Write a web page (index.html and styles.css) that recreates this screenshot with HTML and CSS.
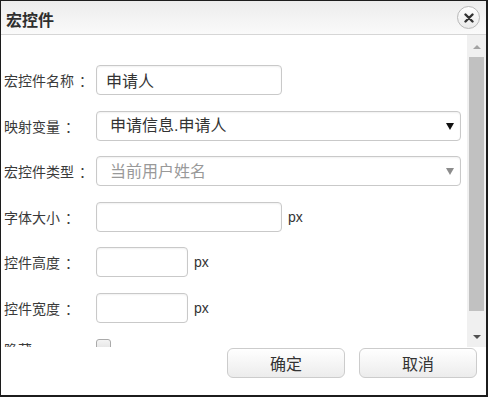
FILE: index.html
```html
<!DOCTYPE html>
<html lang="zh-CN">
<head>
    <meta charset="UTF-8">
    <title>宏控件</title>
    <link rel="stylesheet" href="styles.css">
</head>
<body>
    <div class="dialog">
        <div class="dialog-header">
            <div class="dialog-title">宏控件</div>
            <button class="close-btn" title="关闭">
                <svg width="10" height="10" viewBox="0 0 10 10">
                    <path d="M1.5 1.5L8.5 8.5M8.5 1.5L1.5 8.5" stroke="#333" stroke-width="2.4" stroke-linecap="round"/>
                </svg>
            </button>
        </div>

        <div class="dialog-body">
            <div class="form">
                <div class="form-row">
                    <label class="form-label">宏控件名称<span class="colon">：</span></label>
                    <input class="text-input w-md" type="text" value="申请人">
                </div>
                <div class="form-row">
                    <label class="form-label">映射变量<span class="colon">：</span></label>
                    <div class="select-wrap">
                        <select class="select-input">
                            <option>申请信息.申请人</option>
                        </select>
                    </div>
                </div>
                <div class="form-row">
                    <label class="form-label">宏控件类型<span class="colon">：</span></label>
                    <div class="select-wrap disabled">
                        <select class="select-input" disabled>
                            <option>当前用户姓名</option>
                        </select>
                    </div>
                </div>
                <div class="form-row">
                    <label class="form-label">字体大小<span class="colon">：</span></label>
                    <input class="text-input w-md" type="text">
                    <span class="unit">px</span>
                </div>
                <div class="form-row">
                    <label class="form-label">控件高度<span class="colon">：</span></label>
                    <input class="text-input w-sm" type="text">
                    <span class="unit">px</span>
                </div>
                <div class="form-row">
                    <label class="form-label">控件宽度<span class="colon">：</span></label>
                    <input class="text-input w-sm" type="text">
                    <span class="unit">px</span>
                </div>
                <div class="form-row">
                    <label class="form-label">隐藏</label>
                    <span class="checkbox"></span>
                </div>
            </div>

            <!-- fake scrollbar -->
            <div class="scrollbar">
                <span class="arrow-up"></span>
                <div class="thumb"></div>
                <span class="arrow-down"></span>
            </div>
        </div>

        <div class="dialog-footer">
            <button class="btn">确定</button>
            <button class="btn">取消</button>
        </div>
    </div>
</body>
</html>
```

FILE: styles.css
```css
:root {
    --text-color: #333333;
    --muted-color: #999999;
    --border-color: #c9c9c9;
    --frame-color: #1c1c1c;
}

* {
    margin: 0;
    padding: 0;
    box-sizing: border-box;
    font-family: "Liberation Sans", "Noto Sans CJK SC", sans-serif;
}

body {
    background: #ffffff;
}

.dialog {
    width: 488px;
    height: 397px;
    display: flex;
    flex-direction: column;
    border: 1px solid var(--frame-color);
    border-right-width: 2px;
    border-bottom-width: 2px;
    background: #ffffff;
}

.dialog-header {
    height: 34px;
    flex-shrink: 0;
    display: flex;
    align-items: center;
    justify-content: space-between;
    padding: 0 6px 0 5px;
    border-bottom: 1px solid #d6d6d6;
    background: linear-gradient(#ececec, #fafafa);
}

.dialog-title {
    font-size: 16px;
    font-weight: 700;
    color: #2e2e2e;
    padding-top: 3px;
}

.close-btn {
    width: 23px;
    height: 23px;
    border-radius: 50%;
    border: 1px solid #b8b8b8;
    background: linear-gradient(#ffffff, #eaeaea);
    display: flex;
    align-items: center;
    justify-content: center;
    cursor: pointer;
}

.dialog-body {
    height: 312px;
    flex-shrink: 0;
    display: flex;
    overflow: hidden;
}

.form {
    flex: 1;
    padding: 30px 0 0 3px;
    display: flex;
    flex-direction: column;
    gap: 15.5px;
}

.form-row {
    height: 30px;
    flex-shrink: 0;
    display: flex;
    align-items: center;
}

.form-label {
    width: 92px;
    flex-shrink: 0;
    font-family: "Noto Sans CJK SC", sans-serif;
    font-size: 14px;
    line-height: 20px;
    color: #3a3a3a;
    white-space: nowrap;
}

.colon {
    margin-left: 5px;
    font-family: "Noto Sans CJK SC", sans-serif;
}

.text-input {
    height: 30px;
    padding: 0 9px;
    border: 1px solid var(--border-color);
    border-radius: 4px;
    box-shadow: inset 0 1px 2px rgba(0, 0, 0, 0.06);
    font-size: 16px;
    color: var(--text-color);
    background: #ffffff;
    outline: none;
}

.w-md {
    width: 186px;
}

.w-sm {
    width: 92px;
}

.unit {
    margin-left: 6px;
    font-size: 14px;
    color: var(--text-color);
}

.select-wrap {
    position: relative;
    width: 365px;
}

.select-wrap::after {
    content: '';
    position: absolute;
    right: 7px;
    top: 12px;
    border-left: 4px solid transparent;
    border-right: 4px solid transparent;
    border-top: 7px solid #111111;
    pointer-events: none;
}

.select-wrap.disabled::after {
    border-top-color: #8c8c8c;
}

.select-input {
    width: 100%;
    height: 30px;
    padding: 0 24px 0 13px;
    border: 1px solid var(--border-color);
    border-radius: 4px;
    box-shadow: inset 0 1px 2px rgba(0, 0, 0, 0.06);
    font-size: 16px;
    color: var(--text-color);
    background: #ffffff;
    appearance: none;
    -webkit-appearance: none;
    outline: none;
}

.select-input:disabled {
    color: var(--muted-color);
    opacity: 1;
}

.checkbox {
    width: 15px;
    height: 15px;
    margin-top: 1px;
    border: 1px solid #aaaaaa;
    border-radius: 3px;
    background: linear-gradient(#f4f4f4, #dddddd);
}

.form-row:last-child {
    align-items: flex-start;
}

.form-row:last-child .form-label {
    margin-top: 1px;
}

.scrollbar {
    width: 19px;
    flex-shrink: 0;
    display: flex;
    flex-direction: column;
    align-items: center;
    background: #f0f0f0;
    padding: 10px 0 8px;
}

.arrow-up,
.arrow-down {
    width: 0;
    height: 0;
    border-left: 4px solid transparent;
    border-right: 4px solid transparent;
}

.arrow-up {
    border-bottom: 4px solid #a3a3a3;
}

.arrow-down {
    border-top: 4px solid #505050;
}

.thumb {
    width: 15px;
    height: 254px;
    margin: 8px 0 24px;
    background: #c1c1c1;
}

.dialog-footer {
    flex: 1;
    display: flex;
    justify-content: flex-end;
    align-items: flex-start;
    gap: 14px;
    padding: 1px 9px 0 0;
}

.btn {
    width: 118px;
    height: 30px;
    border: 1px solid #cccccc;
    border-radius: 6px;
    background: linear-gradient(#ffffff, #ececec);
    font-size: 16px;
    color: var(--text-color);
    cursor: pointer;
}
```
